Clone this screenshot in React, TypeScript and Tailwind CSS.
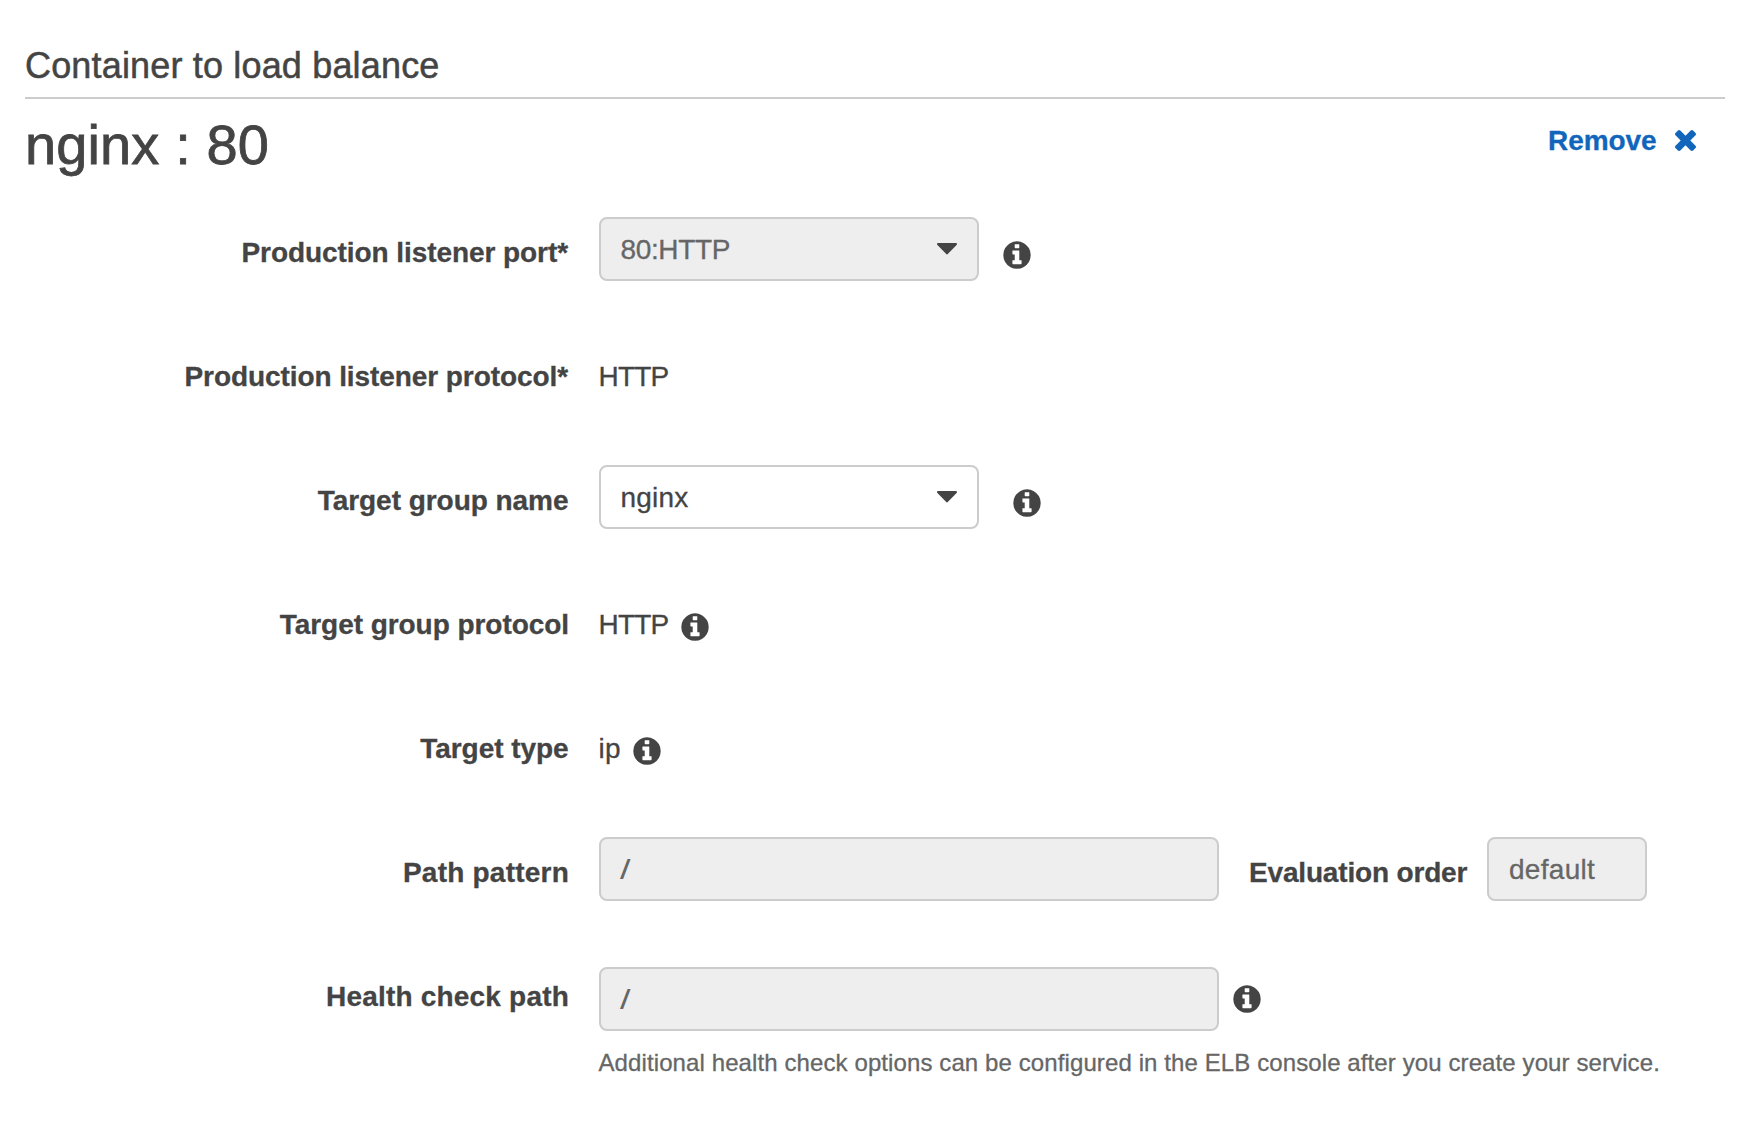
import type { ReactNode } from "react";

function InfoIcon({ className = "" }: { className?: string }) {
  return (
    <svg viewBox="112 112 1568 1568" className={`size-7 shrink-0 fill-[#444] ${className}`} aria-label="Info">
      <path d="M1152 1376v-160q0-14-9-23t-23-9h-96v-512q0-14-9-23t-23-9h-320q-14 0-23 9t-9 23v160q0 14 9 23t23 9h96v320h-96q-14 0-23 9t-9 23v160q0 14 9 23t23 9h448q14 0 23-9t9-23zM1024 480v-160q0-14-9-23t-23-9h-192q-14 0-23 9t-9 23v160q0 14 9 23t23 9h192q14 0 23-9t9-23zM1664 896q0 209-103 385.500t-279.500 279.500-385.500 103-385.500-103-279.500-279.500-103-385.500 103-385.500 279.500-279.500 385.500-103 385.500 103 279.500 279.500 103 385.500z" />
    </svg>
  );
}

function CloseIcon() {
  return (
    <svg viewBox="302 366 1188 1188" className="size-[21px] fill-[#1166bb]" aria-hidden="true">
      <path d="M1490 1322q0 40-28 68l-136 136q-28 28-68 28t-68-28l-294-294-294 294q-28 28-68 28t-68-28l-136-136q-28-28-28-68t28-68l294-294-294-294q-28-28-28-68t28-68l136-136q28-28 68-28t68 28l294 294 294-294q28-28 68-28t68 28l136 136q28 28 28 68t-28 68l-294 294 294 294q28 28 28 68z" />
    </svg>
  );
}

function Caret() {
  return (
    <svg viewBox="0 0 20 12" className="h-3 w-5 fill-[#444]" aria-hidden="true">
      <path d="M1 0h18q1 0 1 1 0 .7-.4 1.100l-8.600 8.700q-.5.600-1 .600t-1-.600L.4 2.100Q0 1.700 0 1 0 0 1 0z" />
    </svg>
  );
}

function Row({ label, labelClass = "", children }: { label: string; labelClass?: string; children: ReactNode }) {
  return (
    <div className="flex h-[124px] items-start">
      <div className={`mr-[30px] w-[544px] shrink-0 pt-5 text-right font-bold whitespace-nowrap ${labelClass}`}>
        {label}
      </div>
      {children}
    </div>
  );
}

const field = "flex h-16 shrink-0 items-start rounded-lg border-2 border-[#ccc] pt-[15px] pl-5";

function Slash() {
  return <span className="inline-block origin-left -translate-x-px scale-x-[1.35] [-webkit-text-stroke:0px]">/</span>;
}

export default function App() {
  return (
    <main className="h-[1140px] w-[1760px] overflow-hidden bg-white pt-[46px] pr-[35px] pl-[25px] font-['Liberation_Sans',Arial,sans-serif] text-[28px] leading-8 text-[#444] [-webkit-text-stroke:0.3px]">
      <h2 className="h-[53px] border-b-2 border-[#ccc] text-[36px] leading-10 tracking-[0.168px] [-webkit-text-stroke:0.5px]">
        Container to load balance
      </h2>
      <div className="flex h-[118px] items-start justify-between">
        <h1 className="pt-3.5 text-[56px] leading-16 tracking-[0.12px] [-webkit-text-stroke:0.8px]">nginx : 80</h1>
        <a className="flex items-start pt-[26px] pr-[29.5px] font-bold tracking-[-0.073px] text-[#1166bb]">
          <span className="mr-[18px]">Remove</span>
          <span className="pt-[4.5px]"><CloseIcon /></span>
        </a>
      </div>

      <Row label="Production listener port*" labelClass="tracking-[-0.069px] pr-px">
        <div className={`${field} w-[380px] justify-between bg-[#eee] pr-5`}>
          <span className="-ml-[0.5px] tracking-[-0.36px] text-[#666]">80:HTTP</span>
          <span className="pt-[9px]"><Caret /></span>
        </div>
        <InfoIcon className="mt-6 ml-6" />
      </Row>

      <Row label="Production listener protocol*" labelClass="tracking-[-0.08px] pr-px">
        <span className="-ml-[0.5px] pt-5 tracking-[-0.8px]">HTTP</span>
      </Row>

      <Row label="Target group name" labelClass="tracking-[-0.04px] pr-[0.5px]">
        <div className={`${field} w-[380px] justify-between bg-white pr-5`}>
          <span className="-ml-[0.5px] tracking-[0.216px]">nginx</span>
          <span className="pt-[9px]"><Caret /></span>
        </div>
        <InfoIcon className="mt-6 ml-[34px]" />
      </Row>

      <Row label="Target group protocol" labelClass="tracking-[-0.054px]">
        <span className="-ml-[0.5px] w-[82.5px] pt-5 tracking-[-0.8px]">HTTP</span>
        <InfoIcon className="mt-6" />
      </Row>

      <Row label="Target type" labelClass="tracking-[-0.057px] pr-[0.5px]">
        <span className="-ml-[0.5px] w-[34.5px] pt-5 tracking-[0.4px]">ip</span>
        <InfoIcon className="mt-6" />
      </Row>

      <Row label="Path pattern" labelClass="tracking-[0.223px]">
        <div className={`${field} w-[620px] bg-[#eee] text-[#666]`}><Slash /></div>
        <span className="w-[268px] pt-5 pl-[30px] font-bold tracking-[-0.169px]">Evaluation order</span>
        <div className={`${field} w-[160px] bg-[#eee] tracking-[0.285px] text-[#666]`}>default</div>
      </Row>

      <Row label="Health check path" labelClass="tracking-[0.199px]">
        <div className="pt-1.5">
          <div className="flex items-start">
            <div className={`${field} w-[620px] bg-[#eee] text-[#666]`}><Slash /></div>
            <InfoIcon className="mt-[18px] ml-3.5" />
          </div>
          <p className="-ml-[0.5px] pt-4 text-[24px] whitespace-nowrap tracking-[0.102px] text-[#666]">
            Additional health check options can be configured in the ELB console after you create your service.
          </p>
        </div>
      </Row>
    </main>
  );
}
